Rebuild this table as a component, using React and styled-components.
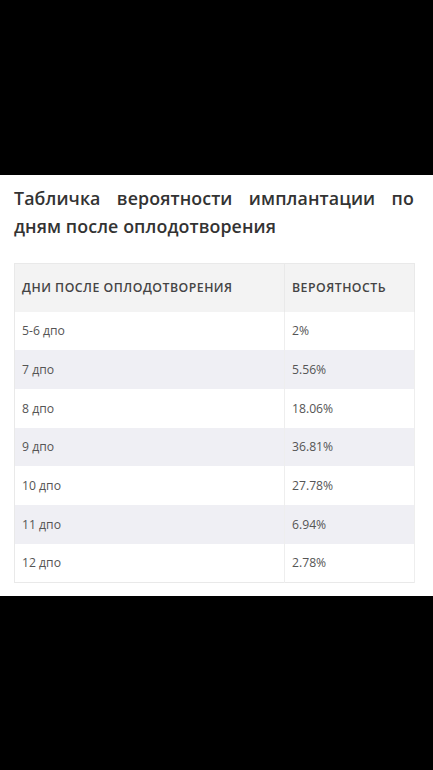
import React from "react";
import styled, { createGlobalStyle } from "styled-components";

const GlobalStyle = createGlobalStyle`
  html, body {
    margin: 0;
    padding: 0;
    background: #000;
  }
  body {
    font-family: "Open Sans", "Noto Sans", sans-serif;
  }
`;

const Page = styled.div`
  width: 433px;
  height: 770px;
  background: #000;
  padding-top: 175px;
  box-sizing: border-box;
`;

const Section = styled.section`
  background: #fff;
  padding: 9px 19px 13px 14px;
`;

const Title = styled.h2`
  margin: 0;
  width: 400px;
  font-size: 17.8px;
  line-height: 28px;
  font-weight: 600;
  letter-spacing: 0.1px;
  color: #333;
  text-align: justify;
`;

const Table = styled.table`
  margin-top: 23px;
  width: 400px;
  border-collapse: collapse;
  border: 1px solid #e9e9e9;
  table-layout: fixed;
`;

const HeadCell = styled.th`
  height: 48px;
  padding: 0 7px;
  background: #f3f3f3;
  border-right: 1px solid #e9e9e9;
  text-align: left;
  font-size: 12.3px;
  font-weight: 600;
  letter-spacing: 0.5px;
  text-transform: uppercase;
  color: #444;
  width: ${(p) => p.$w}px;
  box-sizing: border-box;
`;

const Row = styled.tr`
  background: ${(p) => (p.$alt ? "#efeff4" : "#fff")};
`;

const Cell = styled.td`
  height: 38.7px;
  padding: 0 7px;
  border-right: 1px solid #eeeeee;
  font-size: 12.2px;
  color: #555;
  box-sizing: border-box;
`;

const rows = [
  ["5-6 дпо", "2%"],
  ["7 дпо", "5.56%"],
  ["8 дпо", "18.06%"],
  ["9 дпо", "36.81%"],
  ["10 дпо", "27.78%"],
  ["11 дпо", "6.94%"],
  ["12 дпо", "2.78%"],
];

export default function App() {
  return (
    <Page>
      <GlobalStyle />
      <Section>
        <Title>Табличка вероятности имплантации по дням после оплодотворения</Title>
        <Table>
          <thead>
            <tr>
              <HeadCell $w={270}>Дни после оплодотворения</HeadCell>
              <HeadCell $w={130}>Вероятность</HeadCell>
            </tr>
          </thead>
          <tbody>
            {rows.map(([day, value], i) => (
              <Row key={day} $alt={i % 2 === 1}>
                <Cell>{day}</Cell>
                <Cell>{value}</Cell>
              </Row>
            ))}
          </tbody>
        </Table>
      </Section>
    </Page>
  );
}
